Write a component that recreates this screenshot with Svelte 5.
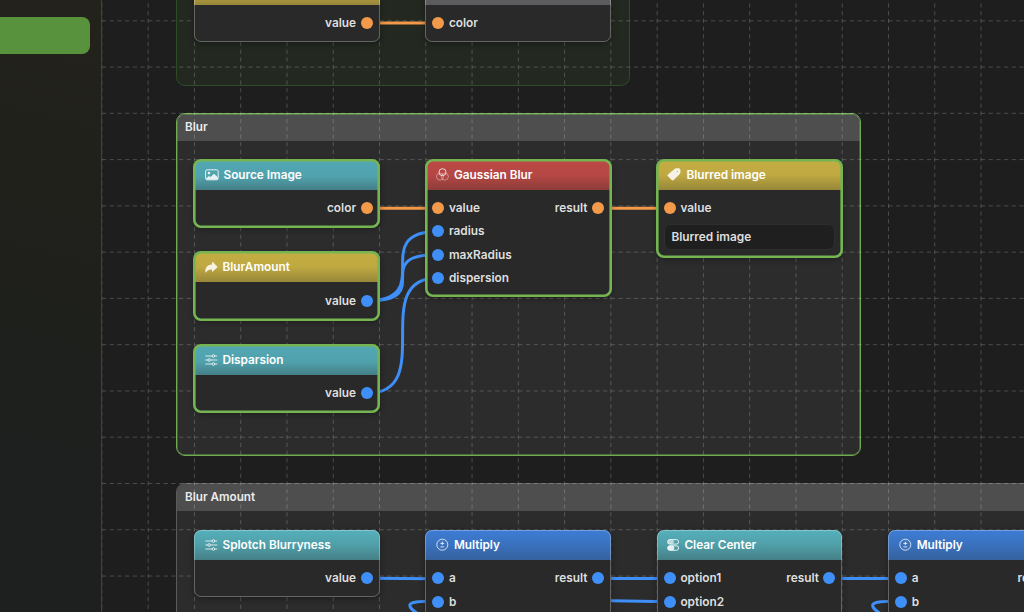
<script>
  const CELL = 46.27;
  const ROW = 23.13;

  const vertical = Array.from({ length: 20 }, (_, i) => 101.9 + i * CELL);
  const horizontal = Array.from({ length: 13 }, (_, i) => 20.8 + i * CELL);

  const groups = [
    { title: '', x: 176, y: -80, w: 454, h: 166, kind: 'tinted' },
    { title: 'Blur', x: 176, y: 113, w: 685, h: 343, kind: 'selected' },
    { title: 'Blur Amount', x: 176, y: 483.4, w: 900, h: 200, kind: 'plain' }
  ];

  const nodes = [
    { title: '', tone: 'gold', x: 194, y: -25.5, rows: [{ out: 'value', color: 'orange' }] },
    { title: '', tone: 'gray', x: 425.4, y: -25.5, rows: [{ in: 'color', color: 'orange' }] },
    { title: 'Source Image', icon: 'image', tone: 'teal', x: 194, y: 159.6, selected: true, rows: [{ out: 'color', color: 'orange' }] },
    { title: 'BlurAmount', icon: 'share', tone: 'gold', x: 194, y: 252.2, selected: true, rows: [{ out: 'value', color: 'blue' }] },
    { title: 'Disparsion', icon: 'sliders', tone: 'teal', x: 194, y: 344.6, selected: true, rows: [{ out: 'value', color: 'blue' }] },
    {
      title: 'Gaussian Blur', icon: 'filters', tone: 'red', x: 425.4, y: 159.6, selected: true,
      rows: [
        { in: 'value', out: 'result', color: 'orange' },
        { in: 'radius', color: 'blue' },
        { in: 'maxRadius', color: 'blue' },
        { in: 'dispersion', color: 'blue' }
      ]
    },
    { title: 'Blurred image', icon: 'tag', tone: 'gold', x: 656.9, y: 159.6, selected: true, field: 'Blurred image', rows: [{ in: 'value', color: 'orange' }] },
    { title: 'Splotch Blurryness', icon: 'sliders', tone: 'teal', x: 194, y: 529.7, rows: [{ out: 'value', color: 'blue' }] },
    { title: 'Multiply', icon: 'math', tone: 'blue', x: 425.4, y: 529.7, rows: [{ in: 'a', out: 'result', color: 'blue' }, { in: 'b', color: 'blue' }, {}] },
    { title: 'Clear Center', icon: 'switch', tone: 'teal', x: 656.9, y: 529.7, rows: [{ in: 'option1', out: 'result', color: 'blue' }, { in: 'option2', color: 'blue' }, {}] },
    { title: 'Multiply', icon: 'math', tone: 'blue', x: 888.2, y: 529.7, rows: [{ in: 'a', out: 'result', color: 'blue' }, { in: 'b', color: 'blue' }, {}] }
  ];

  const curve = (x1, y1, x2, y2) => {
    const d = Math.abs(x2 - x1);
    return `M${x1} ${y1} C${x1 + d} ${y1} ${x2 - d} ${y2} ${x2} ${y2}`;
  };

  const wires = [
    { d: curve(367, 23, 438.2, 23), color: 'orange' },
    { d: curve(367, 208.3, 438.2, 208.3), color: 'orange' },
    { d: curve(598, 208.3, 669.6, 208.3), color: 'orange' },
    { d: curve(367, 300.8, 438.2, 231.4), color: 'blue' },
    { d: curve(367, 300.8, 438.2, 254.6), color: 'blue' },
    { d: curve(367, 393.3, 438.2, 277.7), color: 'blue' },
    { d: 'M367 578.2L438.2 578.8', color: 'blue' },
    { d: curve(598, 578.5, 669.6, 578.5), color: 'blue' },
    { d: 'M598 600.4L669.6 601.8', color: 'blue' },
    { d: curve(829, 578.5, 901, 578.5), color: 'blue' },
    { d: 'M428 601.3 C414 601.6 410 603 409.8 605.5 C409.7 608 412.5 610 418 614', color: 'blue' },
    { d: 'M890.8 601.3 C876.8 601.6 872.8 603 872.6 605.5 C872.5 608 875.3 610 880.8 614', color: 'blue' }
  ];
</script>

<div class="editor">
  <aside class="sidebar">
    <div class="action"></div>
  </aside>

  <main class="canvas">
    {#each groups as group}
      <section class="group {group.kind}" style="left: {group.x}px; top: {group.y}px; width: {group.w}px; height: {group.h}px">
        {#if group.title}
          <header>{group.title}</header>
        {/if}
      </section>
    {/each}

    <svg class="layer" width="1024" height="612">
      <g class="grid">
        {#each vertical as x}
          <path d="M{x} -4.4V612" />
        {/each}
        {#each horizontal as y}
          <path d="M101.9 {y}H1024" />
        {/each}
      </g>
      {#each wires as wire}
        <path class="wire {wire.color}" d={wire.d} />
      {/each}
    </svg>

    {#each nodes as node}
      <article class="node" class:selected={node.selected} style="left: {node.x}px; top: {node.y}px">
        <header class={node.tone}>
          {#if node.icon === 'image'}
            <svg width="14" height="12" viewBox="0 0 14 12">
              <rect x="0.6" y="0.8" width="12.6" height="10" rx="1.6" fill="none" stroke="currentColor" />
              <circle cx="4" cy="4.1" r="1.3" fill="currentColor" />
              <path d="M1.2 9.2L4 6.9L5.5 8L9 4.7L12.8 8.2V9.8Q12.8 10.4 12 10.4H2Q1.2 10.4 1.2 9.2Z" fill="currentColor" />
            </svg>
          {:else if node.icon === 'share'}
            <svg width="13" height="12" viewBox="0 0 13 12">
              <path d="M7 1.5Q7 0.5 7.8 1.1L12.2 5.4Q12.7 5.9 12.2 6.4L7.8 10.6Q7 11.3 7 10.3V8.5C4.1 8.4 2.4 9.3 1.2 11.3Q0.4 12 0.3 10.8C0.3 6.3 2.5 3.6 7 3.4Z" fill="currentColor" />
            </svg>
          {:else if node.icon === 'sliders'}
            <svg class="thin" width="13" height="12" viewBox="0 0 13 12">
              <path d="M0.3 2H7.1M9.7 2H12.3M0.3 6H2.8M5.4 6H12.3M0.3 10H7.1M9.7 10H12.3" />
              <circle cx="8.4" cy="2" r="1.3" />
              <circle cx="4.1" cy="6" r="1.3" />
              <circle cx="8.4" cy="10" r="1.3" />
            </svg>
          {:else if node.icon === 'filters'}
            <svg class="thin" width="13" height="13" viewBox="0 0 13 13">
              <circle cx="6.5" cy="4.2" r="3.5" />
              <circle cx="4" cy="8.6" r="3.5" opacity="0.5" />
              <circle cx="8.9" cy="8.6" r="3.5" opacity="0.5" />
            </svg>
          {:else if node.icon === 'tag'}
            <svg width="14" height="13" viewBox="0 0 14 13">
              <path fill-rule="evenodd" d="M7.6 0.9Q8.2 0.3 9 0.3H11.7Q13.4 0.3 13.4 2V4.5Q13.4 5.3 12.8 5.9L6.7 12.1Q5.7 13 4.7 12.1L0.9 8.3Q0 7.3 0.9 6.4ZM10.3 3A0.6 0.6 0 1 0 10.3 4.2A0.6 0.6 0 1 0 10.3 3Z" fill="currentColor" />
            </svg>
          {:else if node.icon === 'math'}
            <svg class="thin" width="13" height="13" viewBox="0 0 13 13">
              <circle cx="6.3" cy="6.7" r="5.5" />
              <path d="M6.3 3.6V7.2M4.4 5.4H8.2M4.4 8.9H8.2" />
            </svg>
          {:else if node.icon === 'switch'}
            <svg width="12" height="12" viewBox="0 0 12 12">
              <rect x="0.6" y="0.6" width="11" height="4.5" rx="2.25" fill="none" stroke="currentColor" />
              <rect x="0.6" y="0.6" width="6.4" height="4.5" rx="2.25" fill="currentColor" opacity="0.7" />
              <rect x="0.6" y="6.8" width="11" height="4.5" rx="2.25" fill="none" stroke="currentColor" />
              <rect x="0.6" y="6.8" width="6.8" height="4.5" rx="2.25" fill="currentColor" />
            </svg>
          {/if}
          <span>{node.title}</span>
        </header>
        <div class="ports">
          {#each node.rows as row}
            <div class="row" style="height: {ROW}px">
              {#if row.in}
                <i class="port {row.color}"></i>
                <span>{row.in}</span>
              {/if}
              {#if row.out}
                <span class="out">{row.out}</span>
                <i class="port {row.color}"></i>
              {/if}
            </div>
          {/each}
          {#if node.field}
            <div class="field">{node.field}</div>
          {/if}
        </div>
      </article>
    {/each}
  </main>
</div>

<style>
  :global(body) {
    margin: 0;
    overflow: hidden;
    background: #1e1e1e;
  }

  .editor {
    display: grid;
    grid-template-columns: 102px 1fr;
    width: 1024px;
    height: 612px;
    position: relative;
    overflow: hidden;
    font: 600 11.85px Inter, "Liberation Sans", sans-serif;
    color: #dfdfdf;
  }

  .sidebar {
    box-sizing: border-box;
    padding-top: 17px;
    border-right: 1px solid #40413e;
    background: linear-gradient(195deg, #23221b, #1f201c 45%, #1d201f 80%);
    z-index: 1;
  }

  .action {
    width: 90px;
    height: 37px;
    border-radius: 0 8px 8px 0;
    background: #58923c;
  }

  .canvas,
  .layer {
    position: absolute;
    inset: 0;
  }

  .grid path {
    stroke: rgba(255, 255, 255, 0.2);
    stroke-width: 1;
    stroke-dasharray: 4.3 3.41;
    fill: none;
  }

  .wire {
    fill: none;
    stroke-width: 3;
  }

  .wire.orange {
    stroke: #f2994a;
  }

  .wire.blue {
    stroke: #3f8ff8;
  }

  .group {
    position: absolute;
    box-sizing: border-box;
    border: 1px solid #5b5b5b;
    border-radius: 9px;
    background: #2c2c2c;
    overflow: hidden;
  }

  .group.selected {
    border-color: #6fac50;
  }

  .group.selected::after {
    content: '';
    position: absolute;
    inset: 0;
    border-radius: 8px;
    box-shadow: inset 0 0 0 0.4px #6fac50;
  }

  .group.tinted {
    border-color: #2e4b26;
    background: #232921;
  }

  .group header {
    height: 27px;
    line-height: 27px;
    padding-left: 8px;
    background: #4e4e4e;
    color: #ececec;
    font-size: 11.7px;
  }

  .node {
    position: absolute;
    width: 185.6px;
    box-sizing: border-box;
    border-radius: 7px;
    background: #292929;
    box-shadow: 0 2px 6px rgba(0, 0, 0, 0.35);
  }

  .node::after {
    content: '';
    position: absolute;
    inset: 0;
    border: 1px solid rgba(255, 255, 255, 0.28);
    border-radius: 7px;
  }

  .node.selected::after {
    inset: -1px -0.8px -1px -0.8px;
    border: 0;
    border-radius: 8px;
    box-shadow: inset 0 0 0 2.6px #74b552;
  }

  .node header {
    display: flex;
    align-items: center;
    gap: 5px;
    height: 30.2px;
    box-sizing: border-box;
    padding-left: 10.5px;
    border-radius: 7px 7px 0 0;
    color: #fff;
    font-size: 11.8px;
  }

  .node header svg {
    color: rgba(255, 255, 255, 0.86);
    flex: none;
  }

  .thin {
    fill: none;
    stroke: currentColor;
    stroke-width: 0.9;
  }

  .teal {
    background: linear-gradient(#55b0bb, #509fa8 50%, #457f86);
  }

  .selected .teal {
    background: linear-gradient(#52a8b3, #50a2ad 55%, #457f87);
  }

  .gold {
    background: linear-gradient(#c4ad42, #bfa941 50%, #97873a);
  }

  .red {
    background: linear-gradient(#bc4945, #b54744 50%, #8e3d3b);
  }

  .node header.blue {
    background: linear-gradient(#3d7dd5, #3a71bd 50%, #35619e);
  }

  .gray {
    background: #5c5c5e;
  }

  .ports {
    padding: 7px;
  }

  .row {
    display: flex;
    align-items: center;
    gap: 4.5px;
  }

  .port {
    width: 12px;
    height: 12px;
    border-radius: 50%;
    background: #f2994a;
    flex: none;
  }

  .port.blue {
    background: #3f8ff8;
  }

  .out {
    margin-left: auto;
  }

  .field {
    height: 26px;
    box-sizing: border-box;
    margin-top: 4px;
    padding-left: 6.5px;
    border: 1px solid #2e2e2e;
    border-radius: 7px;
    background: #1f1f1f;
    line-height: 24px;
  }
</style>
